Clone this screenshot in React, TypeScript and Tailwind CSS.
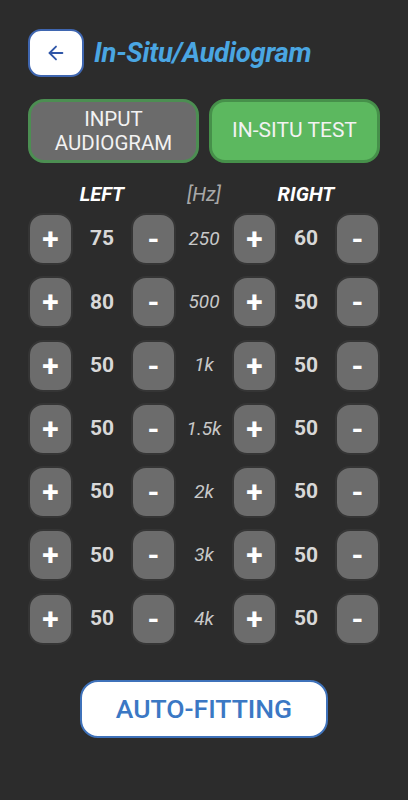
import { ArrowLeft } from 'lucide-react'

const rows = [
  { l: 75, hz: '250', r: 60 },
  { l: 80, hz: '500', r: 50 },
  { l: 50, hz: '1k', r: 50 },
  { l: 50, hz: '1.5k', r: 50 },
  { l: 50, hz: '2k', r: 50 },
  { l: 50, hz: '3k', r: 50 },
  { l: 50, hz: '4k', r: 50 },
]

function Step({ sign }: { sign: string }) {
  return (
    <button className="w-[45px] h-[52px] rounded-[15px] bg-[#6c6c6c] border-2 border-[#353535] flex items-center justify-center text-white text-[30px] font-bold leading-none">
      {sign}
    </button>
  )
}

export default function App() {
  return (
    <div className="w-[408px] h-[800px] bg-[#2c2c2c] px-7 pt-[29px] font-['Roboto',sans-serif]">
      <div className="flex items-center gap-[10px]">
        <button className="w-[56px] h-[48px] rounded-[13px] bg-white border-2 border-[#3f66b0] flex items-center justify-center">
          <ArrowLeft className="w-[22px] h-[22px] text-[#2f56a8]" strokeWidth={2} />
        </button>
        <h1 className="text-[27.5px] font-bold italic text-[#4aa6e2] tracking-[-0.3px]">In-Situ/Audiogram</h1>
      </div>

      <div className="flex gap-[10px] mt-[22px]">
        <button className="w-[171px] h-[64px] rounded-[16px] bg-[#6b6b6b] border-[3px] border-[#4c8e52] text-[#f2f2f2] text-[20.5px] leading-[24px]">
          INPUT<br />AUDIOGRAM
        </button>
        <button className="w-[171px] h-[64px] rounded-[16px] bg-[#5cb85f] border-[3px] border-[#46904a] text-[#f2f2f2] text-[21px]">
          IN-SITU TEST
        </button>
      </div>

      <div className="grid grid-cols-[45px_58px_45px_56px_45px_58px_45px] mt-[20px] text-[20px] leading-[22px]">
        <div className="col-start-2 text-center font-bold italic text-white">LEFT</div>
        <div className="col-start-4 text-center italic text-[#a8a8a8]">[Hz]</div>
        <div className="col-start-6 text-center font-bold italic text-white">RIGHT</div>
      </div>

      <div className="flex flex-col gap-[11.3px] mt-[8px]">
        {rows.map((r, i) => (
          <div key={i} className="grid grid-cols-[45px_58px_45px_56px_45px_58px_45px] items-center">
            <Step sign="+" />
            <div className="text-center text-[21px] font-bold text-[#d8d8d8]">{r.l}</div>
            <Step sign="-" />
            <div className="text-center text-[19px] italic text-[#c8c8c8]">{r.hz}</div>
            <Step sign="+" />
            <div className="text-center text-[21px] font-bold text-[#d8d8d8]">{r.r}</div>
            <Step sign="-" />
          </div>
        ))}
      </div>

      <div className="flex justify-center mt-[35px]">
        <button className="w-[248px] h-[58px] rounded-[18px] bg-white border-2 border-[#3f72ba] text-[#3b78c4] text-[26.5px] font-medium">
          AUTO-FITTING
        </button>
      </div>
    </div>
  )
}
